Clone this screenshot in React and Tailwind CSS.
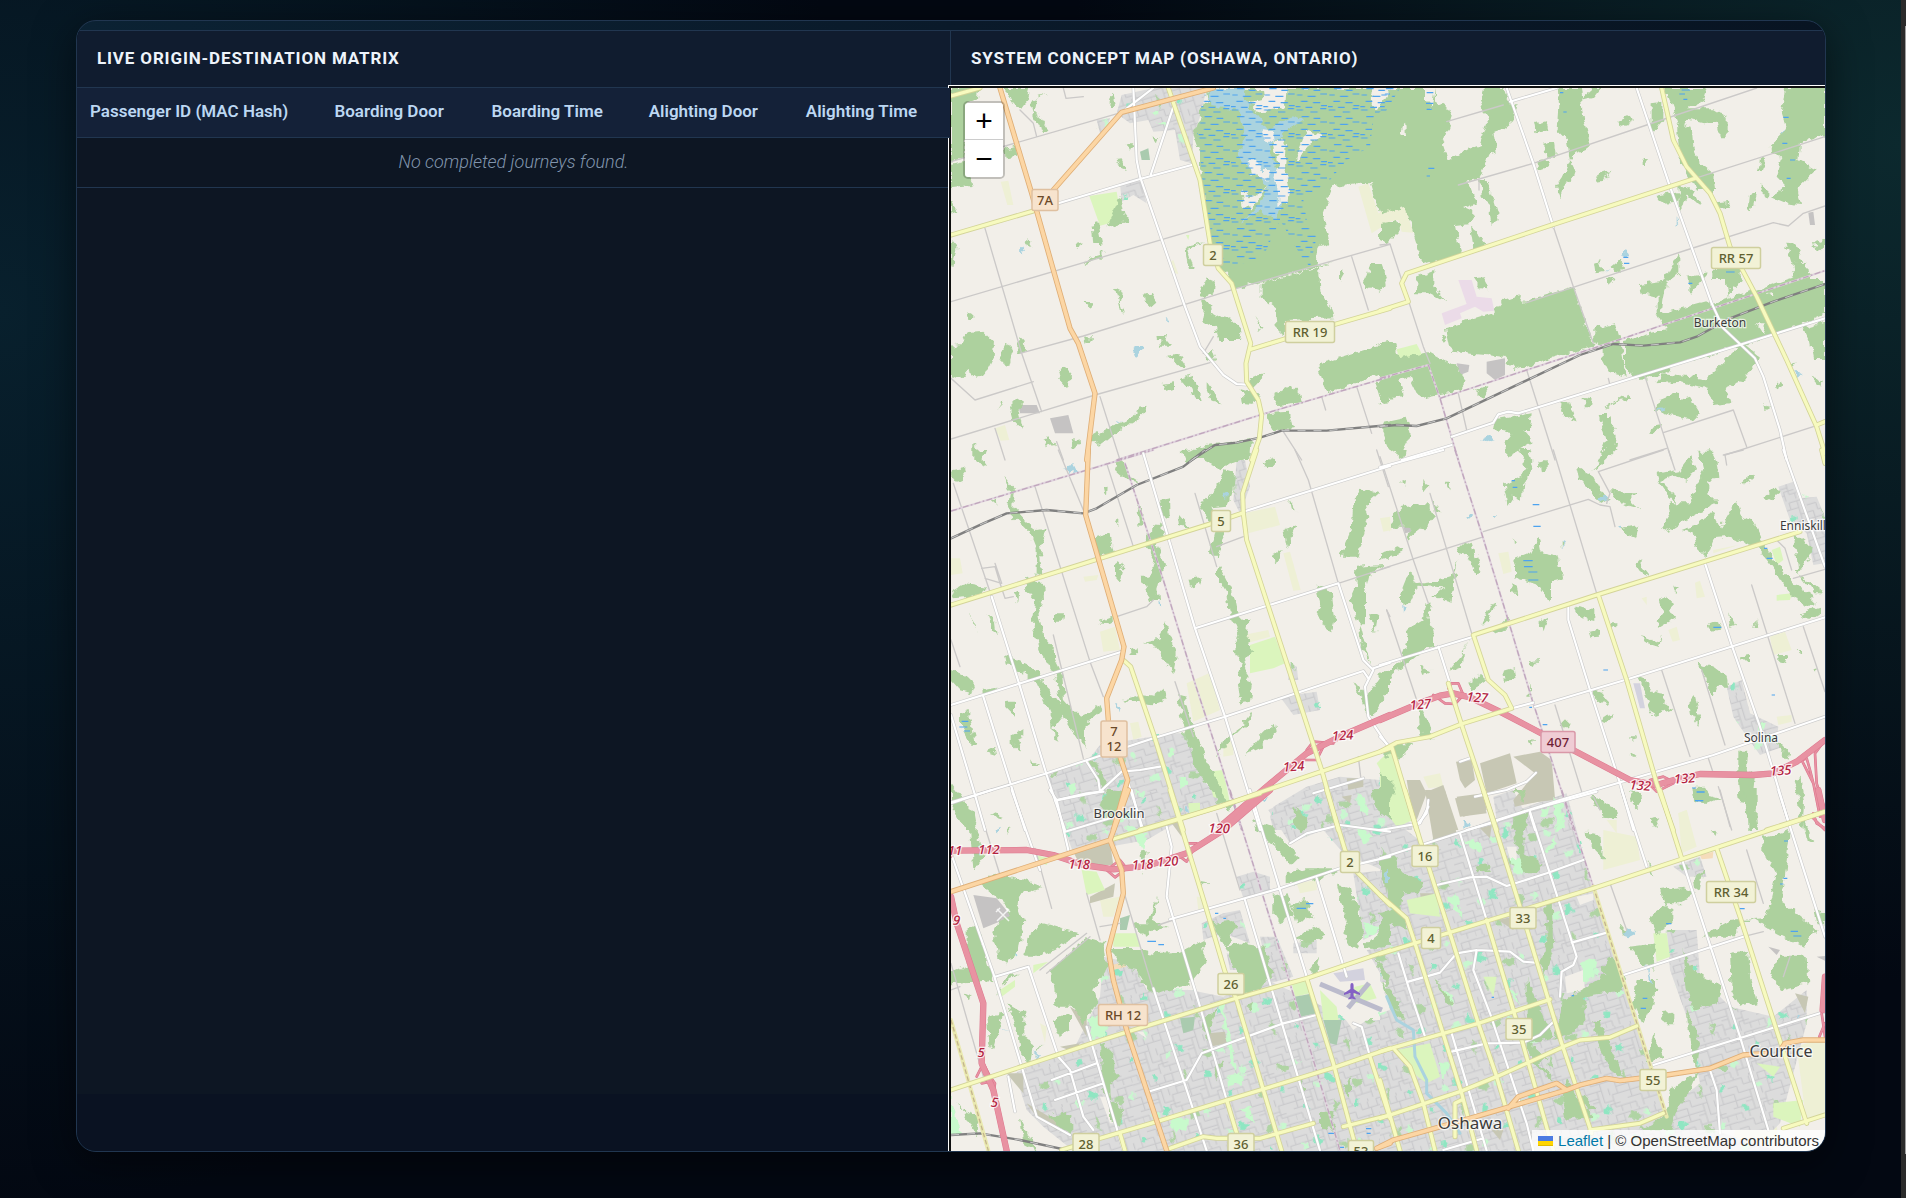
import React from "react";

/* Map artwork: the area is split into six survey sheets; each is drawn at 3 units per pixel. */
const SHEETS = {
  A: "translate(940 80) scale(0.33333)",
  B: "translate(1380 80) scale(0.33333)",
  C: "translate(940 450) scale(0.33333)",
  D: "translate(1380 450) scale(0.33333)",
  E: "translate(940 790) scale(0.33333)",
  F: "translate(1380 790) scale(0.33333)",
};

const RESIDENTIAL = {
  A: "545,45 640,24 800,24 780,110 760,170 755,250 720,240 705,150 640,155 625,120 570,130 530,100|470,120 510,115 500,150 480,160|540,310 600,290 620,370 580,345 545,365",
  C: "480,885 700,850 740,850 750,890 800,940 790,990 850,1060 820,1075 600,1140 375,1140 320,975 440,935|1000,1070 1100,1010 1200,980 1320,990 1340,1140 1000,1140 990,1100|1020,740 1130,725 1140,780 1060,795|890,30 915,30 930,110 900,190 880,150|1050,640 1070,650 1075,690 1045,690",
  D: "340,1040 400,1020 430,1080 350,1110|0,1020 60,1110 100,1120 95,1140 0,1140|350,1120 560,1065 580,1140 345,1140|1195,110 1240,95 1255,145 1310,140 1335,200 1335,340 1300,345 1280,250 1230,210|1040,710 1085,690 1110,790 1195,830 1190,870 1210,890 1140,915 1080,830 1060,800",
  E: "345,0 560,0 700,10 740,80 620,150 400,190 375,120 350,40|985,60 1100,0 1200,0 1350,110 1350,250 1210,190 1150,120 1050,160|1240,250 1350,240 1350,410 1270,450|225,850 330,800 400,780 480,620 490,500 580,520 620,600 750,600 850,620 960,560 1130,640 1220,690 1350,690 1350,1082 400,1082 310,1010 260,960|890,260 940,245 990,260 990,310 910,325|785,400 850,370 900,360 930,460 850,430 790,450|860,490 910,500 900,540 870,540|1060,460 1130,450 1130,490 1060,490|960,440 1010,440 1060,560 990,580|640,620 760,600 780,650 650,690|1280,480 1350,470 1350,600",
  F: "0,60 130,160 240,130 330,90 440,50 560,10 630,270 680,420 760,650 860,980 1000,1020 1190,1082 0,1082|880,230 960,200 980,260 920,260|860,420 950,420 960,560 1050,650 1180,680 1280,600 1280,700 1200,1000 1180,1020 880,1020 860,960 960,880 920,680 870,540",
};
const FARM = {
  A: "182,305 205,302 220,375 202,375|690,545 700,540 715,582 705,580|165,1045 195,1035 208,1080 182,1082|1255,320 1285,310 1315,400 1350,390 1350,425 1295,460",
  B: "0,395 40,380 75,382 100,458 65,455 55,420 0,430",
  C: "910,190 1005,170 1020,225 925,250|1030,310 1050,305 1082,420 1060,422|740,700 810,668 840,780 760,815|480,545 525,530 540,600 490,605|910,555 985,540 990,560 920,580|1320,205 1350,200 1350,245|430,380 475,375 470,390 435,395|570,820 595,815 605,860 580,870|850,880 880,870 880,915 850,920|33,325 60,325 68,370 33,375",
  D: "355,310 385,305 395,365 370,372|945,398 960,392 975,440 950,445|865,540 890,530 900,570 878,575|1170,560 1215,545 1235,600 1180,615|1000,300 1075,285 1000,310|130,980 180,970 190,1010 145,1015|785,445 800,440 800,465|1190,800 1235,795 1235,815 1195,825|895,1090 920,1080 935,1140 905,1140|0,205 30,205 35,240 10,245",
  E: "480,330 540,320 520,380 490,380|770,320 790,320 800,360 775,360|300,700 320,710 315,760|1070,280 1130,270 1130,300 1080,310",
  F: "1250,770 1335,740 1335,980 1280,1000|670,120 770,140 780,210 670,240|680,90 710,90 710,130|895,70 920,60 950,170 905,190|365,100 390,100 385,160|1070,990 1180,960 1200,1060 1060,1060",
};
const BARE = {
  E: "1130,560 1200,540 1340,580 1320,660 1240,720 1210,680|480,920 500,920 540,1000 510,1000|590,725 610,725 620,745",
  F: "555,560 610,540 615,600 560,610|380,170 410,170 410,210 390,210|590,320 640,310 640,330 600,345|0,590 20,620 30,660 0,670",
};
const BEIGE = {
  C: "1220,985 1270,985 1270,1010 1225,1020|1205,1040 1235,1035 1230,1060",
  D: "228,935 275,930 285,990 255,1015 240,990|300,940 390,910 410,1000 320,1030|400,920 480,905 515,930 525,1045 405,1070 400,1050 465,970|225,1045 305,1035 320,1090 240,1100|80,990 120,990 140,1030 110,1110 95,1080|140,1025 190,1005 235,1140 160,1140",
  E: "400,185 510,155 520,225 420,225|450,320 525,280 520,320 450,340|390,650 440,680 440,740|805,730 855,725 860,760 810,770|260,940 360,1000 350,1020 290,980|200,850 250,850 250,910|360,770 420,760 400,785|695,100 720,95 725,140",
  F: "230,20 310,10 320,60 250,80|135,0 195,0 230,130 160,150|420,0 520,0 520,30 440,40|120,310 160,310 165,330 125,340|355,390 400,380 400,420|1245,610 1285,620 1275,670|300,115 335,105 330,145|335,1020 370,1020 360,1050",
};
const QUARRY = {
  A: "235,975 290,975 300,1000 240,1000|330,1015 385,1005 400,1060 345,1060",
  B: "320,845 375,835 375,885 345,900 320,880|230,850 268,855 265,875 240,885|1172,690 1200,682 1235,690 1200,710|1285,398 1300,395 1305,435 1290,435",
  D: "70,230 90,230 95,245 75,250",
  E: "100,315 170,325 215,380 130,415",
  F: "1165,470 1200,480 1190,495|1310,500 1335,498 1335,512",
};
const LIME = {
  A: "448,348 530,335 545,420 480,437|738,465 748,465 745,480",
  B: "50,808 110,792 140,850 65,868",
  C: "930,585 1005,560 1035,640 1000,655 930,670|800,965 850,960 870,1060 820,1040|1310,940 1350,900 1350,1010|745,1060 780,1058 780,1085 750,1090",
  D: "0,930 35,905 70,1010 100,1110 50,1130 0,1060|1175,300 1200,290 1210,330 1190,345|1190,435 1235,430 1230,450 1190,452",
  E: "425,240 470,245 495,300 440,315|520,430 590,430 600,470 520,470|1055,580 1095,570 1110,610 1065,620|180,600 225,570 225,590 185,620|280,525 325,515 280,550|1140,600 1190,650 1200,720 1150,690|285,195 330,205 320,225 290,215|745,45 780,40 780,65 750,70|150,285 170,300 160,310|1245,590 1290,580 1310,625 1250,640 1220,620",
  F: "40,30 70,0 90,90 60,110|80,330 170,310 180,380 90,370|50,780 150,760 180,860 140,880 100,850|820,430 860,430 870,500 830,515|1130,820 1200,830 1180,860|1180,940 1270,930 1260,1010 1180,980|310,560 350,560 340,620",
};
const MINT = {
  A: "635,95 655,90 655,110|650,130 675,128 670,140",
  C: "685,900 700,895 700,915 685,918|720,985 740,980 745,1010 725,1012|385,1005 405,1003 405,1025 388,1025|1250,1030 1275,1040 1285,1100 1260,1080",
  D: "480,1075 510,1075 505,1100 485,1100|530,1060 545,1065 555,1140 535,1140|1135,820 1155,815 1150,840 1135,840",
  E: "440,690 500,660 500,740 460,745|33,920 60,1030 33,1040|560,110 620,130 610,180|210,440 230,430 235,500 205,500|860,860 920,850 900,880 860,890|840,640 850,640 890,830 880,850|690,990 740,980 740,1020 700,1025|900,960 930,950 945,1000|1240,100 1300,140 1270,160|1270,400 1340,410 1280,440",
  F: "520,20 545,40 520,180 490,190 530,130|395,210 430,200 440,250 400,250|600,520 650,500 640,560 610,580|180,810 210,820 190,870|240,150 300,160 300,185|180,590 220,620 215,650|370,580 400,600 420,650|20,370 50,390 20,410|200,330 230,310 250,385",
};
const COURSE = {
  A: "600,215 625,205 630,240 605,240",
  E: "1065,620 1120,610 1130,670 1080,680|720,685 765,680 760,720 730,730|540,385 570,375 560,420 540,420|1150,690 1205,690 1190,765 1170,760",
};
const PINK = { B: "235,600 275,600 290,650 335,655 343,692 310,695 285,680 240,700 245,715 195,735 185,700 260,672" };
const PEACH = { E: "515,525 555,515 558,530 520,540", F: "960,195 1000,185 998,205 965,208" };
const LILAC = { D: "760,700 780,700 795,775 780,775", E: "1180,550 1270,535 1275,570 1200,575" };

const WOODS = {
  A: "33,24 33,245 70,235 85,70 110,60 115,24|33,255 75,245 95,318 33,325|190,24 270,24 265,60 240,90 215,60|275,60 330,40 290,50 280,95 300,110 330,155 310,162 285,120 275,90|515,35 525,75 505,75|195,205 230,195 235,230 200,235|33,360 52,392 33,400|455,435 475,430 488,495 460,495|500,440 540,350 550,400 570,425 540,430 520,450|450,530 498,515 480,535 430,550|260,480 275,485 270,500 255,495|405,495 425,490 415,510|33,480 50,500 40,560 33,560|33,800 60,795 80,760 130,755 165,790 160,840 140,880 110,890 85,870 60,900 33,895|200,790 215,815 205,855 180,850 190,810|235,765 250,780 255,815 235,820|355,870 375,860 398,885 378,922 360,900|525,625 545,635 540,665 552,705 540,690|615,645 635,638 652,665 635,680 618,668|430,668 455,670 455,688|432,770 455,768 455,785 438,788|79,700 100,700 100,720 85,720|655,765 675,765 670,785 695,790 695,800 660,800|685,830 715,822 740,860 730,865 700,845|800,840 815,800 828,840 815,845|665,915 705,910 705,925 670,930|722,895 762,888 785,960 765,960 750,915 725,910|800,905 845,970 815,965 800,930|450,1075 510,1040 540,1030 580,1010 600,980 625,975 600,1015 550,1045 510,1075 480,1100|740,500 790,490 745,510 762,568 750,568 742,530|780,645 800,595 825,605 820,640 790,660|780,665 805,665 815,700 850,720 870,715 905,750 900,780 835,780 825,745 790,725 795,700|800,24 805,60 785,75 775,130 760,160 780,215 780,260 790,350 800,430 812,500 840,560 870,600 880,628 1000,598 1180,545 1130,555 1135,500 1168,490 1150,400 1180,318 1260,308 1290,310 1315,395 1350,380 1350,24|965,610 1140,560 1145,640 1175,690 1180,715 1035,720 1035,765 1010,740 1005,685 965,655|1275,600 1290,555 1325,555 1342,600 1325,635 1280,620|940,710 965,745 960,750|1200,565 1215,580 1200,605|1132,853 1350,785 1350,870 1158,940|1305,905 1350,890 1350,970 1325,972|995,945 1040,918 1080,940 1085,968 1050,970 1015,975|905,925 960,940 940,975 912,972|920,895 975,882 940,920|975,1000 1045,995 1060,1045 1000,1050|725,1115 800,1095 880,1085 935,1080 930,1140 735,1140|310,1080 325,1072 345,1095 318,1100|392,1080 418,1075 420,1095 398,1100|175,990 188,962 180,965|210,975 230,955 255,970 235,990 250,1050 215,1015|100,1095 135,1125 130,1140 100,1140|530,240 545,238 560,270 545,265|635,170 655,172 650,190|560,190 580,190 570,210",
  B: "0,24 165,24 165,60 215,90 205,150 185,180 205,240 260,210 300,195 325,120 300,60 310,24 370,24 385,70 410,70 400,120 370,145 340,155 350,215 325,220 300,290 260,300 275,330 290,370 250,385 285,400 270,430 225,435 235,480 248,520 130,555 75,380 0,400|300,300 320,300 345,370 360,420 335,435 325,370 305,345|270,440 290,455 320,495 280,505|110,590 160,570 160,620 200,665 150,640 108,640|280,595 315,592 325,628 300,625|195,745 340,700 370,660 415,645 430,665 580,620 640,800 405,868 370,830 210,815|0,790 40,780 60,835 150,815 230,860 260,900 240,930 120,955 90,890 60,900 70,945 5,970 0,970|530,24 600,24 610,120 630,200 590,215 570,240 560,180 530,150 535,80|600,60 640,24 660,24 640,50|465,130 500,120 508,150 470,160|490,195 525,185 530,225 500,230|470,245 500,240 505,258 470,270|715,125 750,110 755,125 720,138|642,290 695,272 670,305 650,308|785,240 800,240 800,252 785,252|570,240 585,270 575,300 550,320 538,355 525,320 550,285|815,70 850,65 850,120 815,160|855,24 980,24 970,60 920,85 1000,85 1040,110 1040,175 1020,175 1010,125 970,130 930,120 900,140|890,130 935,140 940,200 960,250 1000,280 1005,330 950,330 930,290 900,240|1215,24 1335,24 1335,165 1260,190 1255,240 1310,270 1250,330 1260,375 1210,370 1175,355 1220,320 1190,290 1205,240 1165,205 1220,150 1205,100|1140,235 1155,230 1145,280 1135,275|1145,310 1165,330 1165,350 1145,345|1110,345 1128,340 1115,395 1105,395|1010,370 1055,365 1050,380 1020,388|825,345 880,335 900,345 895,365 840,368|895,310 940,330 960,375 925,350 900,390|645,545 660,540 668,575 650,580|695,560 720,540 735,560 725,575 700,570|675,590 705,600 690,615|780,615 850,605 895,520 895,580 860,610 850,660 845,700 990,660 1000,670 1100,640 1220,595 1290,575 1290,600 1335,600 1335,700 1270,730 1130,780 1080,800 1000,820 900,850 830,890 760,895 735,850 735,780 860,750 830,700 830,650 785,640|640,745 705,730 720,780 740,890 690,880 665,830 665,800 640,790|925,590 985,580 930,645|1000,570 1085,560 1085,610 1055,620 1050,655 1040,600 1000,600|1215,485 1245,487 1270,545 1235,550|1302,485 1335,475 1335,505 1310,515|1235,550 1280,548 1285,580 1245,590|980,895 1090,790 1140,830 1090,900 1040,920 1055,970 1000,975 985,930 900,905 830,910 850,880|1270,745 1335,725 1335,840 1300,840 1290,790|10,1025 80,1010 95,1060 60,1130 30,1110 10,1060|545,965 570,970 590,1025 560,1015 540,1000|610,950 635,955 630,985 615,985|675,985 740,940 755,955 720,960 680,985|655,1005 685,1005 710,1070 705,1110 660,1135 680,1080|350,1020 455,1000 450,1050 430,1050 460,1085 380,1130 375,1090 400,1060 345,1050|840,960 900,935 900,960 930,950 960,1000 940,1020 870,1005 830,990|810,1040 840,1035 830,1060 808,1058|955,1115 1000,1115 1000,1140 960,1140|1155,965 1170,985 1160,990|1190,910 1205,905 1195,930|180,775 200,770 190,785|285,930 330,920 310,955|0,430 55,420 60,450 20,490 0,480|0,560 15,580 20,620 0,630|1225,850 1250,845 1235,870|1295,890 1330,900 1320,920",
  C: "105,0 140,0 130,30 145,48 110,35|40,60 70,55 75,90 50,95 33,75|190,80 225,120 220,170 260,215 290,240 320,235 315,255 300,290 305,330 310,380 290,370 290,300 270,250 220,200 205,170 210,130|530,30 555,35 570,80 600,100 565,95 525,60|730,0 920,0 910,30 840,55 790,30 750,25|850,60 885,70 880,120 860,170 815,175 820,215 850,230 850,260 830,330 810,310 825,240 780,170 830,110|590,180 600,160 610,210 600,230|660,150 690,145 692,200 665,190|715,190 755,235 720,225|620,250 660,215 675,260 650,285 675,340 655,420 660,450 630,450 605,380 630,380 640,330 615,290|460,262 510,248 525,310 470,320|525,345 540,333 550,360 540,398 525,380|485,112 500,110 498,140 488,125|968,35 1005,20 1005,50 975,52|1030,240 1070,228 1055,260 1040,290|990,315 1028,300 1010,340|1260,110 1320,130 1275,170 1285,200 1255,320 1200,320 1235,240 1240,160|1248,350 1330,345 1290,370 1275,430 1275,520 1260,520 1228,450 1250,400|1130,400 1175,430 1185,500 1170,552 1130,490 1140,460|840,350 880,430 890,480 905,510 925,510 920,560 940,600 910,640 935,710 930,755 905,760 895,690 905,640 885,600 895,550 865,480 860,430 830,380|1240,695 1280,740 1320,680 1350,660 1350,720 1300,800 1280,790 1270,760|1260,520 1280,600 1290,640 1265,600 1255,540|1290,490 1315,490 1305,550|255,380 275,395 310,395 312,450 295,490 310,560 345,600 345,630 370,680 375,750 420,800 490,765 480,790 430,830 440,890 410,865 370,800 345,680 300,600 278,530 285,450 260,420|195,615 280,650 305,690 350,750 380,780 340,830 360,870 340,860 335,800 290,700 250,670 200,640|33,660 80,680 105,705 95,730 60,720 33,690|200,755 225,755 225,800 195,770|215,855 250,835 250,860 230,870 245,910 215,880|345,490 370,490 365,515 345,515|480,515 520,500 522,515 485,525|610,575 660,565 675,510 690,560 710,620 700,670 680,640 650,590|570,600 590,595 592,615 572,615|545,750 600,735 640,740 670,715 680,745 640,760 590,755|60,790 85,780 105,870 115,880 90,885 60,830|715,735 735,740 750,800 785,900 795,930 830,990 865,1070 885,1085 840,1050 770,960 745,880 720,780|935,785 900,835 850,870 830,925 870,870 930,810|1005,815 1010,845 960,895 915,915 960,860|140,900 160,890 165,915 148,910|33,1000 75,1060 110,1120 100,1140 75,1140 33,1060|270,930 295,945 275,945|80,400 135,410 125,430 90,440 40,445 33,430|745,390 780,385 782,400 750,408|220,425 238,430 235,460|445,930 475,935 480,970 505,1010 490,1030 470,970|1075,1070 1105,1120 1095,1140 1060,1120|140,490 165,520 170,560 155,540|90,490 110,540 95,515|1050,150 1075,190 1055,175|760,0 780,10 760,20|330,970 355,965 345,985|120,720 170,710 170,730 130,730|525,210 535,205 535,235|155,150 170,148 172,165",
  D: "50,0 80,0 75,25 55,20|415,0 445,0 460,60 430,100 425,150 400,140 385,165 375,105 420,80 440,50|475,35 500,30 500,60 480,65|590,50 640,80 665,130 690,150 660,165 640,130 600,90|655,30 670,0 710,0 680,30 640,65|690,120 730,130 770,130 750,150 775,175 720,160|725,235 775,225 765,265 740,255|960,20 990,0 1010,40 1015,85 985,90 985,130 1015,160 950,190 860,245 840,235 870,190 865,160 930,160 950,100 970,60|830,75 900,60 930,20 945,50 920,95 880,75 840,90 880,130 885,160 845,120|905,240 945,225 970,205 1000,190 1020,230 1030,215 1070,150 1090,200 1120,215 1140,260 1180,330 1240,400 1300,440 1300,470 1230,440 1190,370 1130,290 1050,260 1000,265 980,320 950,290 940,250|1080,105 1120,70 1125,90|1150,140 1190,105 1200,130 1170,150|1240,250 1295,290 1290,320 1255,370 1250,320|1255,370 1330,430 1300,430|35,200 65,170 140,160 165,195 130,235 80,275 90,230 40,230|0,310 70,290 70,305 0,330|160,150 185,190 165,185|60,95 75,90 72,110|130,80 145,110 130,130|195,95 210,95 208,118|235,290 275,275 305,365 285,370 265,320 240,310|60,435 90,360 110,400 215,385 240,320 220,390 215,455 160,440 190,415 110,410 90,455 60,460|400,330 450,310 475,258 485,310 535,320 550,385 510,395 510,455 480,410 450,400 405,385 405,350|395,395 410,410 415,430 390,425|770,340 790,325 785,355 805,380 780,370|585,470 640,480 640,510 600,500|475,515 505,500 490,550|630,545 660,538 660,560 635,562|690,520 712,520 712,538 690,535|835,450 865,440 885,505 835,535 830,515 850,490|785,555 830,575 845,560 835,590 800,580|880,410 900,410 885,430|985,520 1005,512 1025,520 1020,542 995,545|1045,490 1065,525 1050,530|1260,490 1320,470 1320,490 1290,510 1265,505|1195,615 1220,615 1215,645 1195,640|1080,620 1110,615 1110,630 1085,632|1250,600 1265,600 1262,612|1295,660 1310,655 1308,670|950,640 1000,650 1040,680 1045,710 1010,710 1000,740 975,680|925,755 945,735 960,800 955,825 930,790|770,680 795,690 820,730 855,735 850,765 875,775 820,795 800,740|640,720 670,730 685,765 650,750|665,800 695,790 690,810 660,820|370,665 405,655 410,690 375,695|445,635 480,630 460,655|265,700 300,675 320,690 280,715|305,520 330,470 355,460 330,490 320,520|335,545 380,505 390,530 350,555|140,455 155,455 145,500 165,560 165,590 130,600 80,640 0,710 0,680 60,640 85,570 80,540 130,510|275,560 250,600 245,650 205,665 240,620|120,650 155,660 130,675|110,760 140,800 160,870 125,860|450,690 455,740 445,740|545,815 565,815 565,835 548,835|445,870 462,872 455,890|1075,905 1105,905 1100,960 1125,975 1115,1065 1080,1060 1075,1000|1190,870 1230,915 1225,930 1195,895|1240,990 1265,980 1275,1060 1270,1140 1255,1100 1260,1050|940,1010 975,1010 990,1035 1025,1045 975,1065 945,1050|755,1035 785,1025 790,1060 770,1075 750,1050|635,1030 680,1060 710,1090 700,1105 655,1080|1105,1080 1125,1080 1135,1140 1105,1140|810,1110 838,1105 825,1130|750,905 770,920 755,920|750,862 770,862 760,875|0,900 50,880 100,880 60,930 45,910 20,920|0,970 40,990 40,1030 0,1100|405,1090 440,1080 435,1140 400,1140|1125,510 1132,535 1120,530|400,265 408,280 402,285|545,275 552,285 545,290",
  E: "60,40 100,60 110,120 130,200 100,240 90,120|120,285 160,250 240,265 310,290 270,305 240,310 230,340 250,400 240,480 200,520 175,500 160,430 180,390 210,380 190,330 150,310|33,550 80,530 80,420 110,405 130,470 160,570 100,575 33,580|260,440 310,400 415,430 340,480 290,500 250,500|325,545 440,445 490,460 500,540 460,600 470,640 430,700 395,650 350,650 345,590|515,480 600,480 640,490 720,485 790,450 800,520 740,590 640,610 600,570 590,540 540,530|580,400 620,400 650,320 640,390 680,410 640,420 620,440 590,420|815,400 880,390 890,410 860,470 900,460 970,470 1000,550 960,600 910,610 900,570 860,480 830,430|1000,320 1040,310 1060,380 1020,400 1000,370|1050,340 1100,330 1120,380 1070,400|1060,440 1130,410 1160,440 1110,460 1080,450|1040,250 1100,235 1180,235 1190,250 1130,270 1040,280|1190,280 1230,290 1240,330 1260,350 1270,440 1240,480 1210,430 1220,400|1270,470 1350,400 1350,470 1300,475|1300,500 1350,560 1340,590|1140,500 1130,560 1110,540|940,90 990,110 1020,140 1080,200 1050,230 1010,170 950,120|1060,50 1100,100 1090,130 1065,110|170,620 200,560 240,550 170,600|200,640 250,670 250,740 280,760 270,820 240,790 230,720|340,690 390,670 390,720 360,740|310,760 280,800 290,780|480,760 520,780 520,840 540,860 510,890 515,930 490,900|510,930 550,960 540,1010 510,990|795,680 830,660 800,750 790,720|820,840 850,810 830,870|1140,970 1180,960 1180,1020 1140,1010|1080,860 1100,900 1085,900|330,980 380,965 400,1000 400,1040 350,1000|240,980 290,1082 250,1060|50,930 60,960 120,980 110,1040 80,980|485,50 500,0 560,0 540,60 500,90|820,0 880,40 870,60 830,30|75,610 100,620 85,630|1230,860 1230,920 1210,900|150,70 185,80 170,90|200,120 215,115 200,135|780,275 805,280 790,290|600,185 620,180 610,250|140,680 190,670 160,780 145,740|920,650 940,640 930,665|1290,0 1350,0 1350,90 1310,60",
  F: "0,190 50,200 60,240 130,280 110,310 70,310 60,360 30,350 20,290 0,270|400,140 430,90 430,190 490,220 480,250 430,250|495,330 515,330 520,480 495,560 480,520 500,450|550,630 600,600 680,550 660,530 700,500 735,560 730,600 610,620 620,690 570,730 520,750|640,690 660,690 690,770 730,860 700,850 660,780|820,730 850,800 800,820|770,570 830,570 820,640 790,700 760,640|745,470 830,460 820,540 790,520|810,380 850,350 880,360 880,400 830,430|840,300 910,290 950,310 900,340 860,340 870,380|1150,140 1230,120 1215,260 1200,330 1310,420 1270,470 1190,430 1110,380 1050,440 960,440 1050,390 1160,380 1190,250 1150,180|1050,490 1100,480 1110,560 1130,640 1080,650 1055,600|910,480 940,540 1020,590 1010,640 940,660 920,600|1170,550 1200,500 1280,500 1285,580 1200,600|870,900 950,850 920,920 890,960 870,1020 780,1020 860,975|920,660 960,760 950,850 930,760|1090,0 1130,0 1130,80 1110,120|1250,0 1270,80 1300,160 1280,150|620,125 660,130 670,210 640,180|630,20 700,50 715,85 670,80|750,0 790,10 780,50|810,90 835,90 820,110|800,210 820,260 805,250|440,560 500,700 520,740 450,760 500,800 480,820 530,880 490,850 440,780|845,670 880,665 880,700 855,700|560,940 600,980 560,975|590,900 650,960 620,960|0,370 60,350 80,420 40,400 0,450|0,570 50,620 70,700 30,640|940,260 970,240 960,300 945,290|995,120 1012,125 1010,138|720,400 745,430 725,440|285,230 320,220 330,245 300,250|160,560 220,640 200,640|400,0 440,0 430,40|1300,360 1335,370 1335,400 1310,400|560,860 600,940 640,980 560,990 550,930",
};
const ISLANDS = {
  A: "965,150 1000,155 1005,185 980,185|1000,190 1020,175 1040,200 1035,260 1050,320 1045,370 1015,380 1015,320 1000,300 1015,250|905,325 935,355 985,320 960,350 935,385 910,380|1065,240 1095,150 1150,165 1105,195 1085,240|920,240 945,240 965,270 990,270 985,300 960,295 930,280|965,24 1040,24 1035,85 950,95 925,65 970,60|1300,24 1350,24 1330,60 1310,95 1295,60",
  B: "60,165 75,125 78,165|0,24 25,24 10,55 0,60|135,24 165,24 155,80 135,60|1160,640 1180,635 1180,650|1130,730 1160,730 1150,760",
};
const WATER = {
  A: "805,24 910,24 915,60 985,150 1060,105 1090,120 1030,160 990,200 1000,240 1040,350 1005,420 960,390 900,430 960,370 985,320 930,270 890,230 915,170 905,100 850,80 808,75|572,810 590,798 612,805 595,825|245,500 255,515 243,520|680,718 690,720 685,728|535,1020 545,1025 535,1030",
  B: "135,24 155,24 150,50 138,50|725,520 735,510 745,530 735,535|300,1080 330,1065 345,1080 315,1090|670,578 690,570 675,580|1205,160 1220,145 1210,165|830,985 855,980 840,992|1245,875 1262,885 1255,890|890,415 898,430 890,435",
  C: "370,50 400,45 410,65 385,75|850,125 862,120 858,150|655,450 665,465 657,468|525,760 540,770 535,790|970,1045 985,1042 975,1055|735,1070 748,1075 740,1095",
  D: "265,195 280,195 270,203|650,145 685,140 680,155 660,158|70,460 80,470 72,485|340,200 350,195 350,208|550,275 558,280 550,292|710,235 725,233 722,240|250,1110 265,1120 250,1140",
  E: "175,715 220,725 180,718|280,780 300,800 290,805|160,120 180,110 170,130|225,490 235,495 228,510",
  F: "725,435 745,415 770,430 745,442|795,520 818,580 805,575|10,250 30,240 30,285 15,275|1245,680 1260,675 1255,690|380,70 400,65 395,78",
};
const MARSH = {
  A: "800,24 1350,24 1350,60 1300,120 1290,200 1220,240 1170,300 1090,360 1100,420 1130,470 1110,560 1090,540 1020,420 970,530 880,560 840,560 812,480 790,350 780,215 770,150 785,75",
  B: "0,24 60,24 20,90 0,130",
};
const DASHES = {
  B: "140,38 160,38|138,70 160,70|140,88 155,88|145,265 163,265|140,288 150,288|905,30 930,30|898,42 915,42|910,58 922,58|1210,112 1226,112|1207,190 1222,190|1230,240 1245,240|1220,295 1232,295|730,532 745,532|732,550 748,550|1038,576 1064,576|925,610 937,610|550,96 560,96|540,38 550,38",
  C: "65,814 85,814|58,831 82,831|72,843 90,843",
  D: "395,92 405,92|398,112 412,112|458,164 478,164|460,229 482,229|430,332 458,332|432,350 458,350|445,366 472,366|445,390 475,390|1160,325 1178,325|1000,532 1024,532|670,660 684,660|488,824 502,824|950,1026 975,1026|945,1052 968,1052|936,1014 948,1014|1152,295 1162,295|1175,735 1185,735|448,772 456,772",
  E: "1070,355 1098,355|1098,341 1120,341|622,454 648,454|655,464 672,464|1165,1030 1188,1030|1278,1016 1294,1016|1280,1030 1292,1030|1195,1072 1212,1072|825,370 835,370|850,385 858,385",
  F: "950,6 972,6|948,32 970,32|858,401 874,401|788,625 802,625|782,655 798,655|1212,153 1224,153|1210,265 1222,265|1232,424 1254,424|1240,438 1264,438|1078,356 1094,356|1200,282 1210,282|335,622 342,622|575,617 582,617",
};

const LANES = {
  A: "33,245 545,97|33,665 790,442|240,820 430,768 880,628 1350,493|33,1077 465,945 810,848|135,445 245,820 305,995|33,895 105,960 280,905|480,950 540,1140|370,24 378,55 430,50|1235,530 1285,690|165,1045 195,1140|350,1085 370,1140|1030,1055 1085,1140|1145,950 1157,990|1250,920 1295,1060|240,90 280,130 290,170|820,770 790,820",
  B: "200,125 370,75|235,315 460,250 800,135 1130,24|945,295 1335,170|440,668 920,510 1180,428 1225,438 1270,400 1335,378|520,440 580,620 640,790|0,495 30,492 130,800 150,850|235,940 260,1050|440,870 525,1140|795,890 875,1140|850,1058 1060,990 1100,1100|750,1140 860,1105|1035,1125 1300,1040|297,300 297,330|685,895 690,915",
  C: "40,100 155,440|285,110 450,635 490,740|340,555 430,925|355,0 430,180|500,40 580,290|765,130 830,350|530,500 620,470 640,450|1065,0 1105,90 1195,400|1195,400 1350,350|1310,0 1345,110|705,695 760,860|125,355 165,350 180,400|165,340 185,400 135,385|180,400 195,445 220,440|830,290 910,260|33,570 60,650|1340,480 1350,500|1255,920 1262,980",
  D: "0,358 305,262|310,245 625,148 660,165 690,170 705,230|520,0 650,430|0,20 100,330 145,460|150,130 275,550|655,65 850,0|655,65 690,130 680,160|865,0 885,60|20,480 110,750|845,660 930,920|965,660 1035,885|1115,405 1245,820|1270,530 1335,725|525,765 605,1025|985,925 1000,970|1015,1010 1055,1140|1240,385 1335,358|1190,270 1215,295 1235,360|1035,15 1040,45|1030,15 1090,0",
  E: "100,0 180,255|285,175 335,355|440,310 480,450|33,520 130,860|550,300 640,600|830,70 900,300|33,600 60,590|300,540 440,430|320,550 450,440|480,410 540,400|655,405 700,390",
  F: "690,280 740,420|1100,180 1150,340|1020,0 1050,110|1090,440 1150,425|1230,500 1210,560|640,20 660,60",
};
const BORDERS = {
  A: "530,1140 960,1005 1350,890",
  B: "0,895 145,855 180,955 235,1140|180,955 440,870 700,785 1335,572",
  C: "33,183 640,0|555,40 670,390 765,700 830,900 905,1140",
  D: "225,0 305,250 395,545 455,745 550,1040 580,1140",
  E: "870,0 1010,450 1120,810 1200,1082",
  F: "545,0 640,290",
};
const OLIVE = { E: "33,690 145,1082", F: "640,290 860,980" };
const RAIL = {
  A: "755,1140 825,1095 890,1088 960,1073 1025,1052 1160,1052 1350,1035",
  B: "0,1040 50,1035 110,1038 200,1015 400,920 600,825 700,792 790,797 900,787 950,770 1050,715 1180,665 1335,612",
  C: "33,265 130,220 200,190 320,180 430,190 470,175 590,105 730,50 795,0",
  E: "33,1035 120,1030 240,1050 380,1080",
};
const WHITE = {
  A: "580,24 590,240 600,290 735,680 780,800 850,885 890,912 918,914|545,97 640,24|355,370 600,297 755,255|632,285 705,65",
  B: "380,24 460,250 520,440|770,24 870,320 995,670 1030,745 1125,835 1150,890 1200,1050 1220,1140|390,65 530,24|215,1070 340,1028 355,1003 385,995 415,1000 1335,715|65,1140 215,1095",
  C: "610,10 765,535 855,800 960,1140|765,535 1195,400 1270,630 1300,660 1275,710 1285,800 1345,890|33,765 545,605|155,440 240,710 320,975 375,1140|33,1057 320,970 640,865 855,800 1270,663 1285,685|910,185 1350,48|1300,655 1350,638|33,795 105,1035 135,1140|130,740 255,1140|440,935 475,990 480,1025|345,1052 480,1025 545,965 600,960 660,950|565,1000 610,1140|1120,1030 1270,985",
  D: "0,645 280,560|175,590 210,700|0,860 40,900|565,465 565,510 630,720 720,1000 760,1140|465,770 735,690 1335,502|975,340 1055,585 1140,830 1225,1115|350,1110 540,1050 1000,915 1335,800|395,775 460,758|0,52 190,0|1210,0 1335,350|240,935 270,925|285,1040 380,1020 440,995 468,968|145,1050 140,1090 110,1125|260,1140 350,1115|450,1090 465,1140",
  E: "33,40 155,0|215,0 300,240|330,0 350,30 385,180|350,30 440,10 490,5|375,125 510,85|33,190 160,550 200,680 290,980 390,1035|165,560 265,530 355,800 390,840 430,980 460,1020|440,710 550,1082|680,110 695,170 680,320 780,650 860,930|640,595 800,1082|930,0 1020,300 1100,560|690,388 1020,295 1200,235 1350,200|915,330 1140,1082|1130,265 1220,560|1050,160 1100,130 1200,105 1350,125|625,905 740,870 785,790 1030,700 1130,675|335,870 470,820|345,930 490,880|1240,700 1265,710 1290,800|575,0 605,115|205,860 225,965",
  F: "0,120 120,100 145,50|0,205 450,60 650,5|240,130 320,390|450,65 590,500 580,525 545,545 540,620|170,285 270,262 320,260 380,288 500,250 610,210|85,575 180,548 230,490 290,480 390,485 430,515 465,518|290,480 280,540 330,670 440,1000 460,1082|55,490 85,590 135,740|215,730 320,1082|215,785 320,760 430,758 480,735 520,695|575,458 680,428|725,0 800,230|905,205 1080,740 1165,1020|730,555 1090,440|820,825 1335,665|990,840 1010,900 1020,1030|1195,0 1335,440|190,1080 310,1045",
};
const YELLOW = {
  A: "33,465 280,393|33,48 120,24|685,24 780,300 812,500 835,565 875,610 932,790 918,850 920,905 955,960 965,1005 958,1075 935,1140|932,808 1040,775 1350,685",
  B: "0,692 85,665 65,610 80,580 500,440 945,295|845,24 880,180 920,260 990,340 1020,400 1050,500 1130,650 1220,840 1310,1040 1335,1120|1310,1035 1335,1025",
  C: "33,465 810,222 905,190|950,0 908,130 910,190 920,270 1145,960 1195,1140|552,632 572,650 640,850 730,1140|600,1140 840,1070 980,1020 1350,895",
  D: "0,905 50,878 150,860 250,820 395,775 375,735 325,690 280,555 650,435 1260,245|655,435 740,690 830,1000 880,1140|205,700 245,825 350,1140|35,890 110,1140|1160,1140 1335,1085|1325,0 1335,40",
  E: "510,150 710,90 960,10|690,0 800,360 855,545 890,630 970,900 1025,1082|33,900 500,745 870,630 1100,565 1350,480|1160,0 1215,180 1250,245 1350,345|365,1080 480,1045 650,995 1190,830 1350,775|540,1030 555,1082|860,930 890,1030|1100,565 1180,820 1250,1082|1290,800 1350,985|690,1075 790,1040 830,1045 960,1045 1120,1000|1210,1010 1350,975",
  F: "0,492 200,430 640,295 1335,65|75,0 120,150 210,430 295,700 350,860 415,1082|310,0 420,350 545,760 635,1030|320,390 400,660 520,1082|0,315 80,385 105,460 245,910 290,1082|0,785 295,700 510,628|0,985 240,905 350,860 450,815 550,770 600,750 690,742 770,708|840,0 905,205|1010,175 1080,380 1280,1000|630,1020 780,1000 850,970|45,780 90,830 130,940 165,1082|0,870 60,1082|1210,1015 1335,975|225,1040 225,940 245,930",
};
const MOTORWAY = {
  C: "1350,795 1210,855 1100,910 980,1010 840,1130",
  D: "0,810 130,755 180,737 220,730 270,742 370,790 750,990 830,1005 900,985 960,972 1120,975 1180,970 1250,935 1335,870",
  E: "33,182 260,180 340,195 430,225 520,238 620,228 740,190 850,120 990,0|33,320 50,400 130,640 125,820 160,900 200,1082",
  F: "1315,0 1335,90|1335,560 1328,660",
};
const RAMPS = {
  C: "1100,900 1120,875 1180,880|1080,930 1130,930 1150,890",
  D: "205,715 215,700 235,700 250,735 225,762 195,760 160,735|1245,940 1280,925 1290,960 1310,1040 1335,1110|1265,930 1300,1000 1320,1100|1335,870 1305,910 1310,1000 1335,1080|800,995 830,1025 880,1000|810,990 850,980 880,995|1300,1090 1310,1120 1335,1135",
  E: "500,240 525,262 560,235 540,210 500,240|740,160 770,160 740,215 720,200|110,860 130,820 150,860 165,880 160,915|125,880 150,875|33,200 40,175",
  F: "1300,85 1335,120|1318,740 1335,700|1325,670 1335,740",
};
const ORANGE = {
  A: "180,24 275,340 340,570 390,745 415,790 465,940 440,1140|340,330 545,97 820,24",
  C: "445,0 437,195 552,590 545,630 500,745 505,810|540,920 563,990 520,1140",
  E: "33,305 510,150 565,0|510,150 545,240 550,310 505,480 520,570 560,720 680,1082|1310,1075 1350,1060",
  F: "0,1070 40,1050 270,985 560,900 600,885 680,865 720,872 860,855 990,835 1090,795 1160,790|1205,775 1215,760 1270,750 1335,750|385,955 415,920 530,880 560,900",
};
const RIVER = { F: "20,620 50,690 100,720 105,800 140,870 140,910 200,970 240,1030" };

const toPath = (s) => "M" + s.trim().split(" ").join("L");

function Shapes({ data, fill }) {
  return Object.entries(data).map(([sheet, list]) => (
    <g key={sheet} transform={SHEETS[sheet]} fill={fill}>
      {list.split("|").map((p, i) => (
        <polygon key={i} points={p} />
      ))}
    </g>
  ));
}

function Lines({ data, stroke, width, dash, cap = "round" }) {
  return Object.entries(data).map(([sheet, list]) => (
    <path
      key={sheet}
      transform={SHEETS[sheet]}
      d={list.split("|").map(toPath).join("")}
      fill="none"
      stroke={stroke}
      strokeWidth={width}
      strokeDasharray={dash}
      strokeLinejoin="round"
      strokeLinecap={cap}
    />
  ));
}

const TONES = {
  yellow: ["#f2f2d6", "#cfcf9e", "#5f6030"],
  orange: ["#f7e3cd", "#dfc0a0", "#6b4a28"],
  red: ["#efccd4", "#d998a8", "#701f38"],
};
const SHIELDS = [
  [1045, 200, 26, "orange", "7A"],
  [1213, 255, 19, "yellow", "2"],
  [1310, 332, 49, "yellow", "RR 19"],
  [1736, 258, 49, "yellow", "RR 57"],
  [1221, 521, 19, "yellow", "5"],
  [1114, 739, 26, "orange", "7", "12"],
  [1558, 742, 34, "red", "407"],
  [1350, 862, 19, "yellow", "2"],
  [1425, 856, 26, "yellow", "16"],
  [1523, 918, 26, "yellow", "33"],
  [1431, 938, 19, "yellow", "4"],
  [1231, 984, 26, "yellow", "26"],
  [1123, 1015, 49, "orange", "RH 12"],
  [1519, 1029, 26, "yellow", "35"],
  [1731, 892, 49, "yellow", "RR 34"],
  [1653, 1080, 26, "yellow", "55"],
  [1086, 1144, 26, "yellow", "28"],
  [1241, 1144, 26, "yellow", "36"],
  [1361, 1151, 25, "yellow", "53"],
];
const PLACES = [
  [1720, 327, 12, "Burketon"],
  [1119, 818, 13, "Brooklin"],
  [1761, 742, 12, "Solina"],
  [1810, 530, 12, "Enniskillen"],
  [1781, 1057, 16, "Courtice"],
  [1470, 1129, 17, "Oshawa"],
];
const EXITS = [
  [1421, 709, "127", -6], [1477, 702, "127", 4], [1343, 740, "124", -4], [1294, 771, "124", -4],
  [1219, 833, "120", 2], [1079, 869, "118", 2], [1143, 869, "118", -4], [1168, 866, "120", -4],
  [989, 854, "112", 0], [955, 855, "11", 0], [956, 925, "9", 6], [981, 1057, "5", 0],
  [994, 1107, "5", 6], [1640, 790, "132", 4], [1685, 783, "132", -4], [1781, 775, "135", -4],
];

function Shield({ x, y, w, tone, lines }) {
  const [fill, stroke, ink] = TONES[tone];
  const h = lines.length > 1 ? 36 : 21;
  return (
    <g>
      <rect x={x - w / 2} y={y - h / 2} width={w} height={h} rx="2" fill={fill} stroke={stroke} strokeWidth="1.5" />
      {lines.map((t, i) => (
        <text key={t} x={x} y={y + 5 + (lines.length > 1 ? i * 15 - 8 : 0)} fill={ink} fontSize="13" fontWeight="500" textAnchor="middle">
          {t}
        </text>
      ))}
    </g>
  );
}

function MapCanvas() {
  return (
    <svg
      className="absolute inset-0 h-full w-full font-['Noto_Sans','Open_Sans',sans-serif]"
      viewBox="951 88 874 1063"
      preserveAspectRatio="xMidYMid slice"
      role="img"
      aria-label="Street map of Oshawa, Ontario"
    >
      <defs>
        <pattern id="streets" width="210" height="180" patternUnits="userSpaceOnUse" patternTransform="rotate(-17) scale(0.7)">
          <rect width="210" height="180" fill="#dcdcdc" />
          <path
            d="M0 12H70V40H140V10H210M0 40H40V70H110V40M140 40H175V70H210M0 70H20V100H90V70M110 70V125H150V100H210M0 100H20V130H60V180M90 100V155H130V180M60 155H90M150 125V155H210M175 155V180M175 10V40M35 12V0M105 12V0M100 12V40M175 100V70M20 130H0M30 155H0V180M30 155V180M60 115H90M130 155V140H175M140 70V100"
            fill="none"
            stroke="#c6c6c8"
            strokeWidth="4"
            strokeLinejoin="round"
          />
        </pattern>
        <pattern id="gardens" width="230" height="190" patternUnits="userSpaceOnUse" patternTransform="rotate(11)">
          <path d="M150 44l14-4 4 8 10 2-4 14-20 2zM24 104l12 2 2 14-14 3zM98 148l14-4 6 14-16 6z" fill="#8fe6c2" />
          <path d="M118 74l22-4 6 12-20 14zM46 20l18 8-6 16-16-6z" fill="#c8f8cf" />
          <path d="M0 44l24-6 10 12-12 14-20-4zM186 112l12 8 8 30-12-8z" fill="#b0d4a4" />
        </pattern>
        <pattern id="marsh" width="97" height="84" patternUnits="userSpaceOnUse" patternTransform="rotate(0)">
          <path
            d="M2 6h20M44 12h22M74 2h18M18 26h22M54 31h20M4 45h16M36 49h24M74 42h20M16 64h20M52 68h22M0 80h14M30 82h20M76 77h18"
            stroke="#4da3f0"
            strokeWidth="3.5"
            fill="none"
          />
        </pattern>
        <filter id="rough" x="0" y="0" width="1" height="1">
          <feTurbulence type="fractalNoise" baseFrequency="0.13" numOctaves="2" seed="4" result="n" />
          <feDisplacementMap in="SourceGraphic" in2="n" scale="9" xChannelSelector="R" yChannelSelector="G" />
        </filter>
      </defs>
      <rect x="900" y="40" width="980" height="1160" fill="#f2efe9" />
      <Shapes data={FARM} fill="#eef0d5" />
      <Shapes data={RESIDENTIAL} fill="url(#streets)" />
      <g filter="url(#rough)">
        <rect x="900" y="40" width="980" height="1160" fill="none" />
        <Shapes data={RESIDENTIAL} fill="url(#gardens)" />
      </g>
      <Shapes data={BARE} fill="#f2efe9" />
      <Shapes data={BEIGE} fill="#c7c7b4" />
      <Shapes data={QUARRY} fill="#c5c3c3" />
      <Shapes data={LIME} fill="#dbf5bd" />
      <Shapes data={PINK} fill="#ebdbe8" />
      <Shapes data={PEACH} fill="#f5dcba" />
      <Shapes data={LILAC} fill="#d3d2de" />
      <g filter="url(#rough)">
        <rect x="900" y="40" width="980" height="1160" fill="none" />
        <Shapes data={MINT} fill="#c8facc" />
        <Shapes data={WOODS} fill="#add19e" />
        <Shapes data={WATER} fill="#aad3df" />
        <Shapes data={ISLANDS} fill="#f2efe9" />
      </g>
      <Shapes data={COURSE} fill="#aacbaf" />
      <Shapes data={MARSH} fill="url(#marsh)" />
      <Lines data={DASHES} stroke="#4da3f0" width={3.5} cap="butt" />
      <Lines data={RIVER} stroke="#aad3df" width={9} />
      <Lines data={LANES} stroke="#cbc9c8" width={4} />
      <Lines data={BORDERS} stroke="#e0d4de" width={6} />
      <Lines data={BORDERS} stroke="#c0a6bc" width={4} dash="18 7 5 7" cap="butt" />
      <Lines data={RAIL} stroke="#808080" width={7} />
      <Lines data={RAIL} stroke="#c9c9c9" width={3} dash="24 24" cap="butt" />
      <Lines data={WHITE} stroke="#cacaca" width={10} />
      <Lines data={WHITE} stroke="#ffffff" width={6.5} />
      <Lines data={OLIVE} stroke="#e9e9b0" width={12} />
      <Lines data={OLIVE} stroke="#c4b48c" width={4} dash="14 8" cap="butt" />
      <Lines data={RAMPS} stroke="#d9708a" width={8} />
      <Lines data={RAMPS} stroke="#e892a2" width={5} />
      <Lines data={MOTORWAY} stroke="#de7a90" width={19} />
      <Lines data={MOTORWAY} stroke="#e892a2" width={16} />
      <Lines data={YELLOW} stroke="#d3d498" width={15} />
      <Lines data={YELLOW} stroke="#f7fabf" width={10} />
      <Lines data={ORANGE} stroke="#dfae76" width={16} />
      <Lines data={ORANGE} stroke="#fcd6a4" width={11} />

      {/* Airfield */}
      <path d="M1320 984 L1382 1010 M1348 1008 L1369 983" stroke="#bbbbcc" strokeWidth="5" fill="none" />
      <g transform="translate(1352 991)" fill="#8461c4">
        <path d="M0-8c1.2 0 1.6 1.4 1.6 2.8V-2L8 2.2V4L1.6 2v3.6L3.6 7.2V8.4L0 7.4-3.6 8.4V7.2L-1.6 5.6V2L-8 4V2.2L-1.6-2v-3.2C-1.6-6.6-1.2-8 0-8z" />
      </g>
      {/* Quarry hammers */}
      <g stroke="#ffffff" strokeWidth="1.5" fill="none" opacity="0.8">
        <path d="M997 921l12-12M1009 921l-12-12M996 912l4-4M1006 908l4 4" />
      </g>

      <g fontSize="13" fontWeight="500" fontStyle="italic" fill="#b32240" stroke="#ffffff" strokeOpacity="0.8" strokeWidth="2.5" paintOrder="stroke" textAnchor="middle">
        {EXITS.map(([x, y, t, r]) => (
          <text key={x + t} x={x} y={y} transform={`rotate(${r} ${x} ${y})`}>
            {t}
          </text>
        ))}
      </g>
      {SHIELDS.map(([x, y, w, tone, ...lines]) => (
        <Shield key={x} x={x} y={y} w={w} tone={tone} lines={lines} />
      ))}
      <g fill="#3c3c3c" stroke="#ffffff" strokeOpacity="0.7" strokeWidth="2.5" paintOrder="stroke" textAnchor="middle">
        {PLACES.map(([x, y, size, t]) => (
          <text key={t} x={x} y={y} fontSize={size}>
            {t}
          </text>
        ))}
      </g>
    </svg>
  );
}

function PanelTitle({ children }) {
  return (
    <h2 className="relative flex h-[57px] shrink-0 items-center border-b border-[#213650] bg-[#101c2f] px-5 text-[17px] font-bold tracking-wider text-[#eef4fb]">
      {children}
    </h2>
  );
}

function JourneyTable() {
  const cell = "h-[50px] px-[13px] pb-[2px] border-b border-[#213650]";
  return (
    <table className="relative w-full table-fixed border-separate border-spacing-0">
      <colgroup>
        <col className="w-[28%]" />
        <col className="w-[18%]" />
        <col className="w-[18%]" />
        <col className="w-[18%]" />
        <col className="w-[18%]" />
      </colgroup>
      <thead className="relative z-20">
        <tr className="bg-[#142138] text-left text-[17px] whitespace-nowrap text-[#bcd7f2]">
          {["Passenger ID (MAC Hash)", "Boarding Door", "Boarding Time", "Alighting Door", "Alighting Time"].map((h) => (
            <th key={h} scope="col" className={`${cell} font-semibold`}>
              {h}
            </th>
          ))}
        </tr>
      </thead>
      <tbody>
        <tr>
          <td colSpan={5} className={`${cell} text-center text-[18px] font-light text-[#8195ad] italic`}>
            No completed journeys found.
          </td>
        </tr>
      </tbody>
    </table>
  );
}

function ZoomControl() {
  const key = "flex h-[37px] w-[38px] items-center justify-center bg-white font-['Liberation_Sans',Arial,sans-serif] text-[30px] leading-none text-black";
  return (
    <div className="absolute top-[13px] left-3 flex flex-col overflow-hidden rounded-[5px] border-2 border-black/20 bg-clip-padding">
      <button type="button" aria-label="Zoom in" className={`${key} border-b border-[#ccc]`}>
        +
      </button>
      <button type="button" aria-label="Zoom out" className={key}>
        −
      </button>
    </div>
  );
}

export default function App() {
  return (
    <div className="flex min-h-screen bg-[#2b2b2b] font-[Roboto,sans-serif]">
      <main className="flex flex-1 flex-col bg-[#030812] bg-[radial-gradient(ellipse_46%_75%_at_0%_26%,#08202d_0%,transparent_100%),radial-gradient(ellipse_44%_70%_at_100%_12%,#0c292e_0%,transparent_100%)] pt-5 pr-[75px] pb-[46px] pl-[76px]">
        <div className="flex flex-1 flex-col overflow-hidden rounded-[20px] border border-[#213650] bg-[linear-gradient(90deg,#0b2233,#0a1a2a_50%,#081422)] shadow-[0_10px_40px_rgba(0,0,0,0.5)]">
          <div className="h-[9px] shrink-0" />
          <div className="grid flex-1 grid-cols-2 border-t border-[#213650]">
            <section className="flex min-w-0 flex-col border-r border-[#213650] bg-[#0a1222]">
              <PanelTitle>LIVE ORIGIN-DESTINATION MATRIX</PanelTitle>
              <div className="mb-[57px] flex-1 bg-[#0d1623]">
                <JourneyTable />
              </div>
            </section>
            <section className="flex min-w-0 flex-col">
              <PanelTitle>SYSTEM CONCEPT MAP (OSHAWA, ONTARIO)</PanelTitle>
              <div className="relative z-10 flex-1 overflow-hidden shadow-[0_0_0_2px_#101010,0_0_0_3px_#ffffff]">
                <MapCanvas />
                <ZoomControl />
                <div className="absolute right-0 bottom-0 flex items-center bg-white/80 px-[6px] font-['Liberation_Sans',Arial,sans-serif] text-[15px] leading-[21px] whitespace-pre text-[#333]">
                  <svg width="15" height="10" viewBox="0 0 15 10" className="mr-[5px]" aria-hidden="true">
                    <path fill="#4C7BE1" d="M0 0h15v5H0z" />
                    <path fill="#FFD500" d="M0 5h15v4H0z" />
                    <path fill="#E0BC00" d="M0 9h15v1H0z" />
                  </svg>
                  <a href="#leaflet" className="text-[#0078a8]">
                    Leaflet
                  </a>
                  <span> | © OpenStreetMap contributors</span>
                </div>
              </div>
            </section>
          </div>
        </div>
      </main>
      <div className="flex w-[5px] shrink-0 flex-col items-end pt-[26px] pb-11" aria-hidden="true">
        <div className="w-px flex-1 bg-[#9f9f9f]" />
      </div>
    </div>
  );
}
